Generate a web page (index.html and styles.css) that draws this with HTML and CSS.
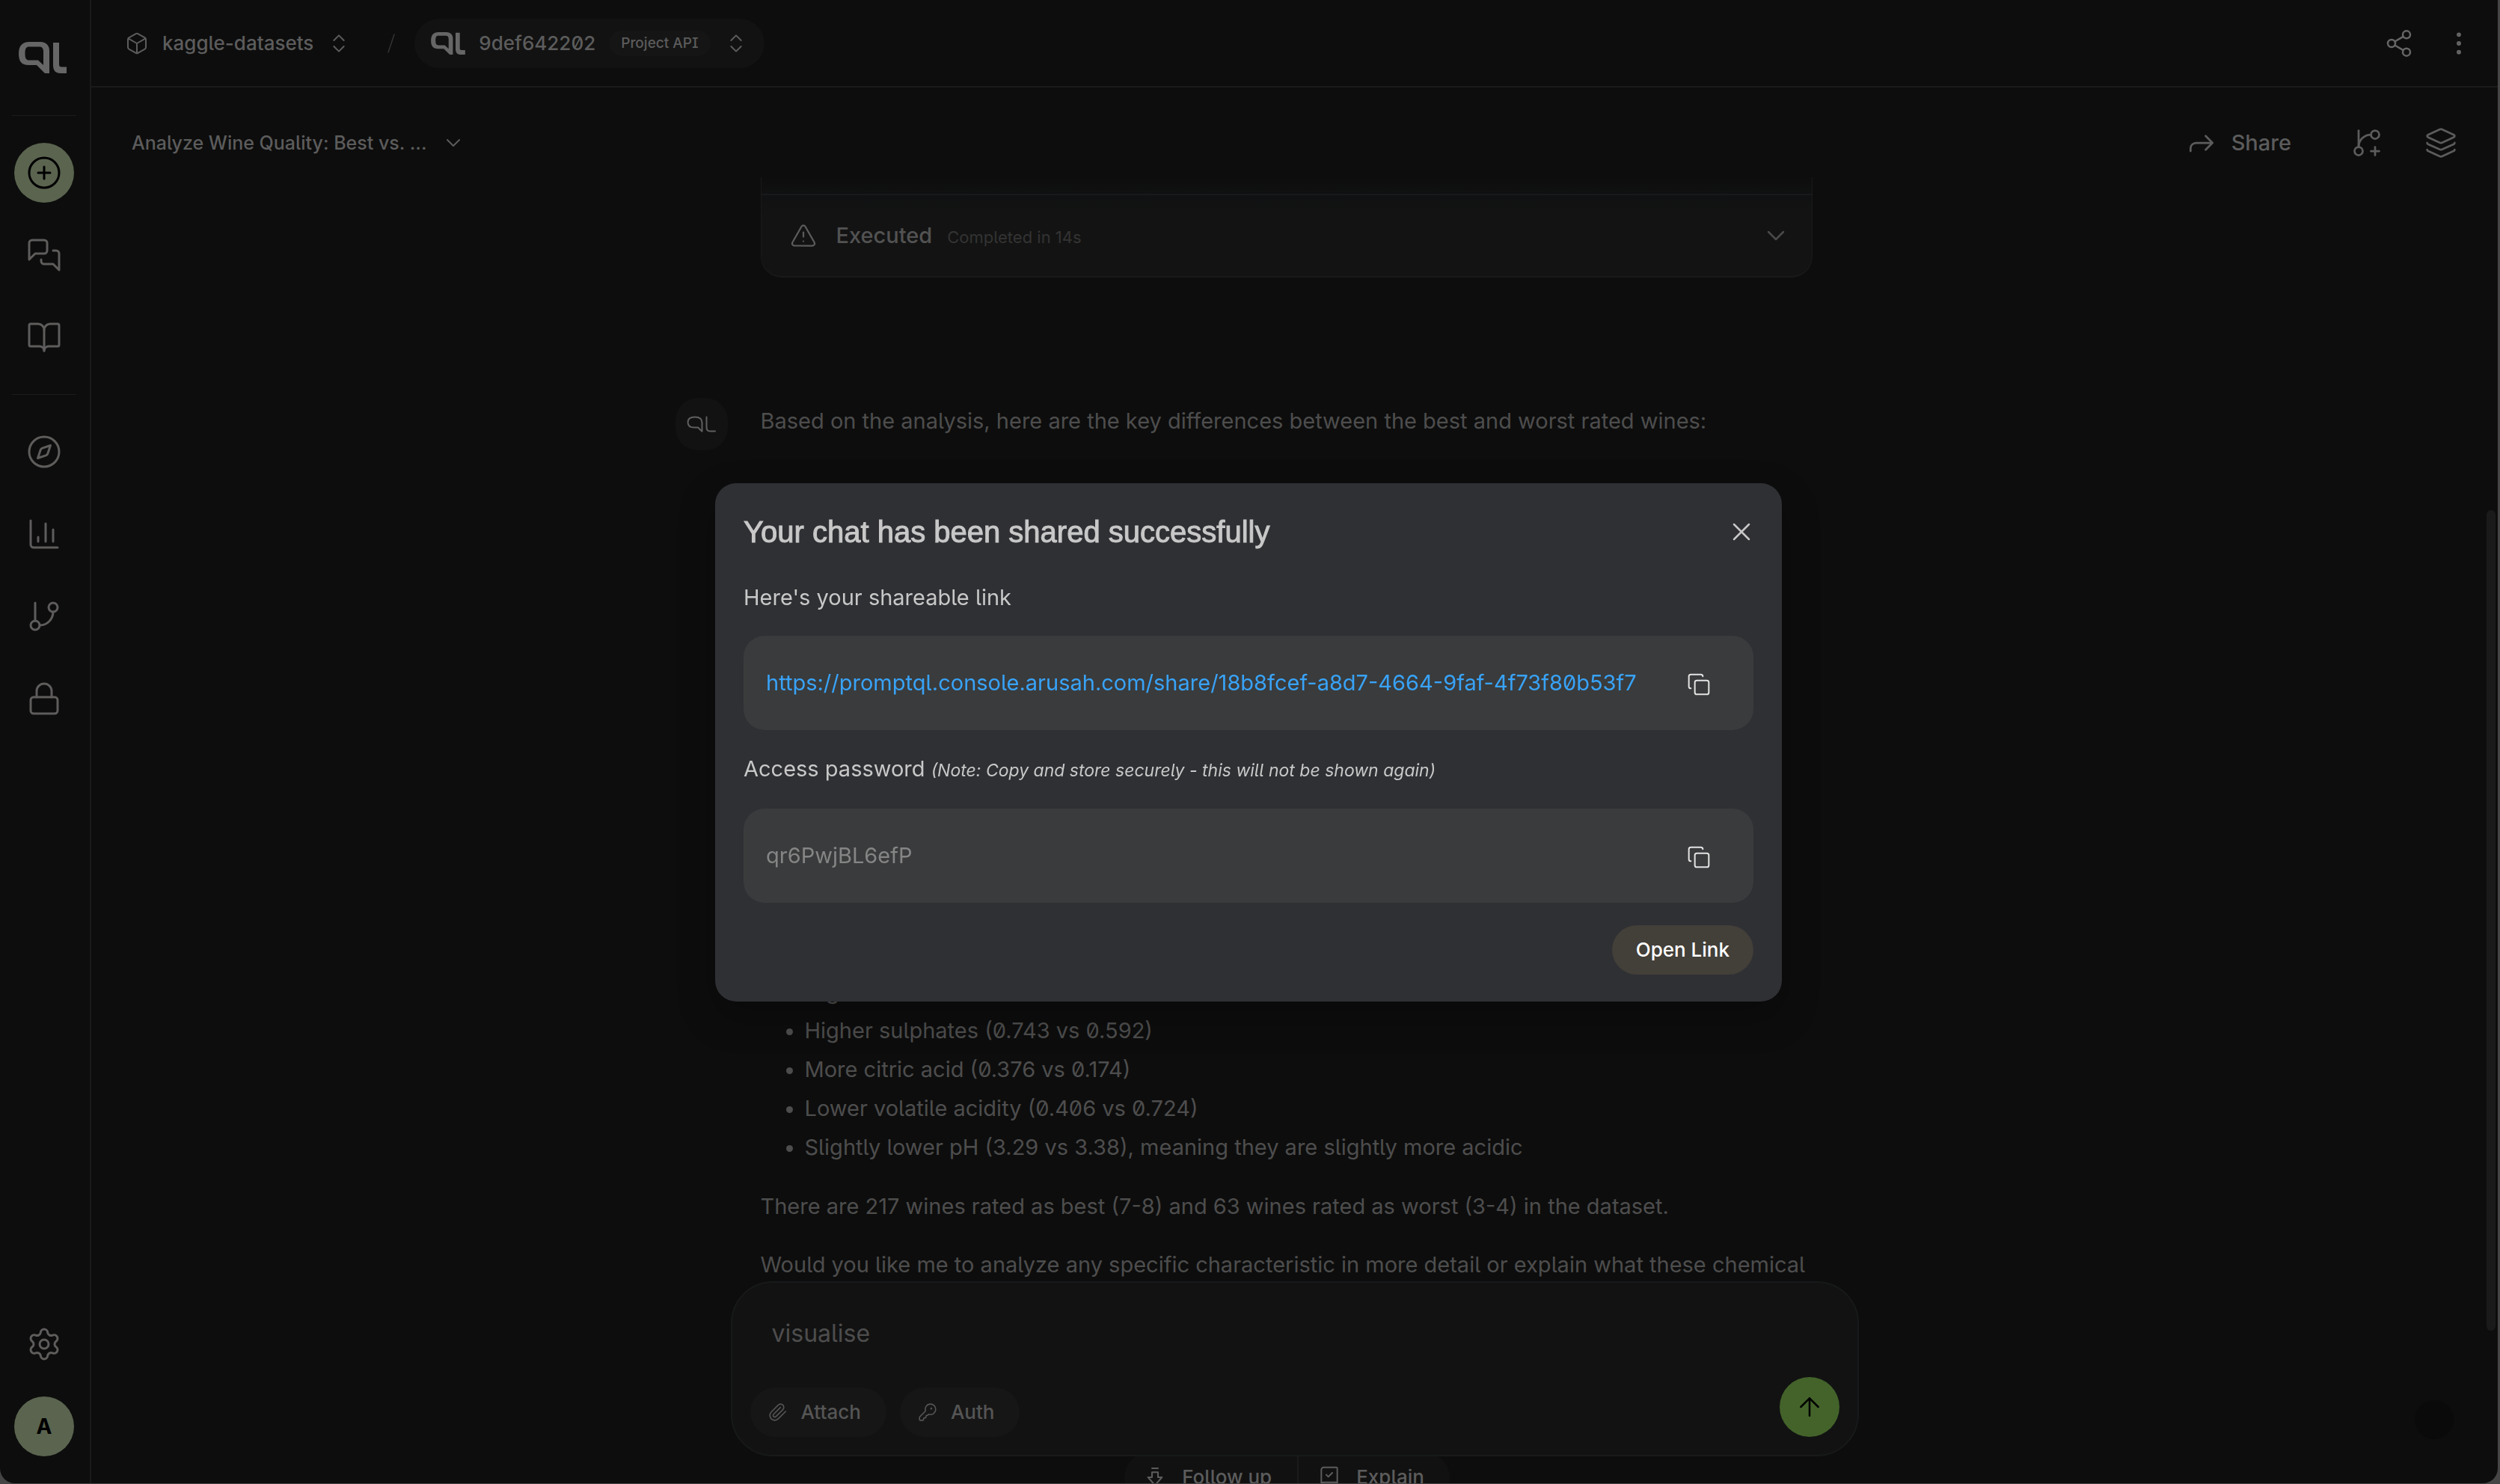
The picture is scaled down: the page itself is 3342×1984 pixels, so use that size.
FILE: index.html
```html
<!DOCTYPE html>
<html lang="en">
<head>
<meta charset="utf-8">
<title>PromptQL Console</title>
<link rel="stylesheet" href="styles.css">
</head>
<body>
<svg class="defs" aria-hidden="true">
  <symbol id="ql" viewBox="0 0 64 42"><path fill="currentColor" fill-rule="evenodd" d="M14 0H29C37 0 41 5 41 12V42H35L24 31H13C4 31 0 26 0 16C0 5 5 0 14 0ZM14 6.500C10 6.500 8.500 9 8.500 15.500C8.500 22 10 24.500 14 24.500H26L33 31V13C33 8.500 31 6.500 28 6.500ZM46 1H54V30C54 32.500 55 33.500 57.500 33.500H64V42H56C49 42 46 38 46 31Z"/></symbol>
  <symbol id="ql-thin" viewBox="0 0 39 22"><path d="M20.500 20.500V9C20.500 4 17 1.500 11 1.500C4 1.500 1.500 4 1.500 8.500C1.500 13 4 15.500 10 15.500H15L20.500 20.800M26.500 1.500V15C26.500 18.500 28 20.500 31 20.500H38"/></symbol>
  <symbol id="plus-circle" viewBox="0 0 24 24"><circle cx="12" cy="12" r="10"/><path d="M8 12h8M12 8v8"/></symbol>
  <symbol id="chats" viewBox="0 0 24 24"><path d="M14 9a2 2 0 0 1-2 2H6l-4 4V4a2 2 0 0 1 2-2h8a2 2 0 0 1 2 2z"/><path d="M18 9h2a2 2 0 0 1 2 2v11l-4-4h-6a2 2 0 0 1-2-2v-1"/></symbol>
  <symbol id="book" viewBox="0 0 24 24"><path d="M12 7v14"/><path d="M3 18a1 1 0 0 1-1-1V4a1 1 0 0 1 1-1h5a4 4 0 0 1 4 4 4 4 0 0 1 4-4h5a1 1 0 0 1 1 1v13a1 1 0 0 1-1 1h-6a3 3 0 0 0-3 3 3 3 0 0 0-3-3z"/></symbol>
  <symbol id="compass" viewBox="0 0 24 24"><circle cx="12" cy="12" r="10"/><path d="m16.240 7.760-1.804 5.411a2 2 0 0 1-1.265 1.265L7.760 16.240l1.804-5.411a2 2 0 0 1 1.265-1.265z"/></symbol>
  <symbol id="chart" viewBox="0 0 24 24"><path d="M3 3v16a2 2 0 0 0 2 2h16M18 17V9M13 17V5M8 17v-3"/></symbol>
  <symbol id="branch" viewBox="0 0 24 24"><path d="M6 3v12"/><circle cx="18" cy="6" r="3"/><circle cx="6" cy="18" r="3"/><path d="M18 9a9 9 0 0 1-9 9"/></symbol>
  <symbol id="lock" viewBox="0 0 24 24"><rect x="3" y="11" width="18" height="11" rx="2"/><path d="M7 11V7a5 5 0 0 1 10 0v4"/></symbol>
  <symbol id="gear" viewBox="0 0 24 24"><path d="M9.671 4.136a2.340 2.340 0 0 1 4.659 0 2.340 2.340 0 0 0 3.319 1.915 2.340 2.340 0 0 1 2.330 4.033 2.340 2.340 0 0 0 0 3.831 2.340 2.340 0 0 1-2.330 4.033 2.340 2.340 0 0 0-3.319 1.915 2.340 2.340 0 0 1-4.659 0 2.340 2.340 0 0 0-3.320-1.915 2.340 2.340 0 0 1-2.330-4.033 2.340 2.340 0 0 0 0-3.831A2.340 2.340 0 0 1 6.350 6.051a2.340 2.340 0 0 0 3.319-1.915"/><circle cx="12" cy="12" r="3"/></symbol>
  <symbol id="cube" viewBox="0 0 24 24"><path d="M21 8a2 2 0 0 0-1-1.730l-7-4a2 2 0 0 0-2 0l-7 4A2 2 0 0 0 3 8v8a2 2 0 0 0 1 1.730l7 4a2 2 0 0 0 2 0l7-4A2 2 0 0 0 21 16ZM3.300 7l8.700 5 8.700-5M12 22V12"/></symbol>
  <symbol id="updown" viewBox="0 0 24 24"><path d="m7 15 5 5 5-5M7 9l5-5 5 5"/></symbol>
  <symbol id="down" viewBox="0 0 24 24"><path d="m6 9 6 6 6-6"/></symbol>
  <symbol id="share-nodes" viewBox="0 0 24 24"><circle cx="18" cy="5" r="3"/><circle cx="6" cy="12" r="3"/><circle cx="18" cy="19" r="3"/><path d="m8.590 13.510 6.830 3.980M15.410 6.510l-6.820 3.980"/></symbol>
  <symbol id="dots" viewBox="0 0 24 24"><circle cx="12" cy="12" r="1"/><circle cx="12" cy="5" r="1"/><circle cx="12" cy="19" r="1"/></symbol>
  <symbol id="forward" viewBox="0 0 24 24"><path d="m15 17 5-5-5-5M4 18v-2a4 4 0 0 1 4-4h12"/></symbol>
  <symbol id="branch-plus" viewBox="0 0 24 24"><path d="M6 3v12"/><circle cx="18" cy="6" r="3"/><circle cx="6" cy="18" r="3"/><path d="M15 6a9 9 0 0 0-9 9M18 15v6M21 18h-6"/></symbol>
  <symbol id="layers" viewBox="0 0 24 24"><path d="M12.830 2.180a2 2 0 0 0-1.660 0L2.600 6.080a1 1 0 0 0 0 1.830l8.580 3.910a2 2 0 0 0 1.660 0l8.580-3.900a1 1 0 0 0 0-1.830z"/><path d="M2 12a1 1 0 0 0 .58.910l8.600 3.910a2 2 0 0 0 1.650 0l8.580-3.900A1 1 0 0 0 22 12"/><path d="M2 17a1 1 0 0 0 .58.910l8.600 3.910a2 2 0 0 0 1.650 0l8.580-3.900A1 1 0 0 0 22 17"/></symbol>
  <symbol id="warning" viewBox="0 0 24 24"><path d="m21.730 18-8-14a2 2 0 0 0-3.480 0l-8 14A2 2 0 0 0 4 21h16a2 2 0 0 0 1.730-3M12 9v4M12 17h.01"/></symbol>
  <symbol id="clip" viewBox="0 0 24 24"><path d="m21.440 11.050-9.190 9.190a6 6 0 0 1-8.490-8.490l8.570-8.570A4 4 0 1 1 18 8.840l-8.590 8.570a2 2 0 0 1-2.830-2.830l8.490-8.480"/></symbol>
  <symbol id="key" viewBox="0 0 24 24"><path d="M2.586 17.414A2 2 0 0 0 2 18.828V21a1 1 0 0 0 1 1h3a1 1 0 0 0 1-1v-1a1 1 0 0 1 1-1h1a1 1 0 0 0 1-1v-1a1 1 0 0 1 1-1h.172a2 2 0 0 0 1.414-.586l.814-.814a6.500 6.500 0 1 0-4-4z"/><circle cx="16.500" cy="7.500" r=".5"/></symbol>
  <symbol id="up" viewBox="0 0 24 24"><path d="m5 12 7-7 7 7M12 19V5"/></symbol>
  <symbol id="follow" viewBox="0 0 24 24"><path d="M15 3H9M15 7v5h4l-7 8-7-8h4V7z"/></symbol>
  <symbol id="explain" viewBox="0 0 24 24"><path d="M4 19.500v-15A2.500 2.500 0 0 1 6.500 2H19a1 1 0 0 1 1 1v18a1 1 0 0 1-1 1H6.500a1 1 0 0 1 0-5H20M9 9.500l2 2 4-4"/></symbol>
  <symbol id="close" viewBox="0 0 24 24"><path d="M18 6 6 18M6 6l12 12"/></symbol>
  <symbol id="copy" viewBox="0 0 24 24"><rect x="8" y="8" width="14" height="14" rx="2"/><path d="M4 16c-1.100 0-2-.9-2-2V4c0-1.100.9-2 2-2h10c1.100 0 2 .9 2 2"/></symbol>
</svg>

<div class="app">
  <nav class="sidebar" aria-label="Main">
    <a class="brand" href="#" aria-label="PromptQL"><svg class="brand-mark"><use href="#ql"/></svg></a>
    <div class="group">
      <a class="nav-item nav-new" href="#" aria-label="New chat"><svg class="icon icon-48"><use href="#plus-circle"/></svg></a>
      <a class="nav-item" href="#" aria-label="Chats"><svg class="icon icon-48"><use href="#chats"/></svg></a>
      <a class="nav-item" href="#" aria-label="Docs"><svg class="icon icon-48"><use href="#book"/></svg></a>
    </div>
    <div class="group">
      <a class="nav-item" href="#" aria-label="Explore"><svg class="icon icon-48"><use href="#compass"/></svg></a>
      <a class="nav-item" href="#" aria-label="Insights"><svg class="icon icon-48"><use href="#chart"/></svg></a>
      <a class="nav-item" href="#" aria-label="Builds"><svg class="icon icon-48"><use href="#branch"/></svg></a>
      <a class="nav-item" href="#" aria-label="Access"><svg class="icon icon-48"><use href="#lock"/></svg></a>
    </div>
    <div class="account">
      <a class="nav-item" href="#" aria-label="Settings"><svg class="icon icon-48"><use href="#gear"/></svg></a>
      <button class="nav-item avatar" type="button">A</button>
    </div>
  </nav>

  <main class="main">
    <header class="topbar">
      <button class="project" type="button">
        <svg class="icon icon-32"><use href="#cube"/></svg><span>kaggle-datasets</span><svg class="icon icon-32"><use href="#updown"/></svg>
      </button>
      <svg class="icon slash" viewBox="0 0 10 26"><path d="M9 1 1 25"/></svg>
      <button class="build" type="button">
        <svg class="build-mark"><use href="#ql"/></svg><span>9def642202</span><span class="badge">Project API</span><svg class="icon icon-32"><use href="#updown"/></svg>
      </button>
      <div class="topbar-actions">
        <button type="button" aria-label="Share project"><svg class="icon icon-40"><use href="#share-nodes"/></svg></button>
        <button type="button" aria-label="More"><svg class="icon icon-40"><use href="#dots"/></svg></button>
      </div>
    </header>

    <div class="threadbar">
      <button class="thread-title" type="button"><span>Analyze Wine Quality: Best vs. ...</span><svg class="icon icon-32"><use href="#down"/></svg></button>
      <div class="thread-actions">
        <button class="share" type="button"><svg class="icon icon-44"><use href="#forward"/></svg>Share</button>
        <button type="button" aria-label="Branch chat"><svg class="icon icon-44"><use href="#branch-plus"/></svg></button>
        <button type="button" aria-label="Artifacts"><svg class="icon icon-44"><use href="#layers"/></svg></button>
      </div>
    </div>

    <section class="chat">
      <div class="column">
        <div class="run-card">
          <div class="run-tail"></div>
          <button class="run-row" type="button">
            <svg class="icon icon-36"><use href="#warning"/></svg>
            <span class="run-state">Executed</span>
            <span class="run-time">Completed in 14s</span>
            <svg class="icon icon-40 run-toggle"><use href="#down"/></svg>
          </button>
        </div>
        <article class="message">
          <div class="bot"><svg class="icon bot-mark"><use href="#ql-thin"/></svg></div>
          <p>Based on the analysis, here are the key differences between the best and worst rated wines:</p>
          <ul>
            <li>Higher alcohol</li>
            <li>Higher sulphates (0.743 vs 0.592)</li>
            <li>More citric acid (0.376 vs 0.174)</li>
            <li>Lower volatile acidity (0.406 vs 0.724)</li>
            <li>Slightly lower pH (3.29 vs 3.38), meaning they are slightly more acidic</li>
          </ul>
          <p>There are 217 wines rated as best (7-8) and 63 wines rated as worst (3-4) in the dataset.</p>
          <p>Would you like me to analyze any specific characteristic in more detail or explain what these chemical</p>
        </article>
      </div>
    </section>
    <div class="scroll-thumb"></div>

    <div class="dock">
      <form class="composer">
        <textarea class="prompt" aria-label="Message">visualise</textarea>
        <div class="composer-row">
          <button class="chip" type="button"><svg class="icon icon-26"><use href="#clip"/></svg>Attach</button>
          <button class="chip" type="button"><svg class="icon icon-26"><use href="#key"/></svg>Auth</button>
          <button class="send" type="button" aria-label="Send"><svg class="icon icon-40"><use href="#up"/></svg></button>
        </div>
      </form>
      <div class="suggestions">
        <button type="button"><svg class="icon icon-32"><use href="#follow"/></svg>Follow up</button>
        <button type="button"><svg class="icon icon-32"><use href="#explain"/></svg>Explain</button>
      </div>
    </div>
    <div class="help-dot"></div>
  </main>
</div>

<div class="overlay">
  <div class="dialog" role="dialog" aria-modal="true" aria-labelledby="dialog-title">
    <div class="dialog-head">
      <h2 id="dialog-title">Your chat has been shared successfully</h2>
      <button class="close" type="button" aria-label="Close"><svg class="icon icon-40"><use href="#close"/></svg></button>
    </div>
    <p class="field-label">Here's your shareable link</p>
    <div class="field">
      <a class="share-link" href="https://promptql.console.arusah.com/share/18b8fcef-a8d7-4664-9faf-4f73f80b53f7">https://promptql.console.arusah.com/share/18b8fcef-a8d7-4664-9faf-4f73f80b53f7</a>
      <button class="copy" type="button" aria-label="Copy link"><svg class="icon icon-32"><use href="#copy"/></svg></button>
    </div>
    <p class="field-label">Access password <em>(Note: Copy and store securely - this will not be shown again)</em></p>
    <div class="field">
      <span class="password">qr6PwjBL6efP</span>
      <button class="copy" type="button" aria-label="Copy password"><svg class="icon icon-32"><use href="#copy"/></svg></button>
    </div>
    <div class="dialog-foot"><button class="open-link" type="button">Open Link</button></div>
  </div>
</div>
</body>
</html>
```
FILE: styles.css
```css
* { box-sizing: border-box; }

body {
  margin: 0;
  height: 100vh;
  padding: 0 3px 1px 0;
  overflow: hidden;
  background: #454545;
  color: #5c5c5c;
  font-family: Inter, "Liberation Sans", sans-serif;
  font-size: 29px;
  line-height: 44px;
  font-optical-sizing: none;
  font-feature-settings: "ss02";
}

button {
  margin: 0;
  padding: 0;
  border: 0;
  background: none;
  color: inherit;
  font: inherit;
  font-optical-sizing: inherit;
  font-feature-settings: inherit;
  display: flex;
  align-items: center;
}

p, h2, ul { margin: 0; }

.defs { position: absolute; width: 0; height: 0; }

.icon {
  flex: none;
  display: block;
  fill: none;
  stroke: currentColor;
  stroke-width: 1.5px;
  stroke-linecap: round;
  stroke-linejoin: round;
}
.icon-26 { width: 26px; height: 26px; }
.icon-32 { width: 32px; height: 32px; }
.icon-36 { width: 36px; height: 36px; }
.icon-40 { width: 40px; height: 40px; }
.icon-44 { width: 44px; height: 44px; }
.icon-48 { width: 48px; height: 48px; }

.app {
  display: flex;
  height: 100%;
  overflow: hidden;
  background: #0d0d0d;
  border-radius: 0 0 20px 20px;
}

/* Sidebar */
.sidebar {
  flex: none;
  display: flex;
  flex-direction: column;
  width: 122px;
  padding: 0 18px 36px 16px;
  border-right: 2px solid #1a1a1a;
  color: #5f5d5c;
}
.brand {
  display: flex;
  align-items: center;
  justify-content: center;
  height: 154px;
  color: #666;
}
.brand-mark { width: 64px; height: 42px; margin-right: 4px; }
.group {
  display: flex;
  flex-direction: column;
  align-items: center;
  gap: 30px;
  padding: 36px 0;
  border-top: 1px solid #1c1c1c;
}
.nav-item {
  display: flex;
  align-items: center;
  justify-content: center;
  width: 80px;
  height: 80px;
  border-radius: 50%;
  color: inherit;
}
.nav-new, .avatar { background: #5a644f; color: #000; }
.avatar { font-size: 28px; font-weight: 700; }
.account {
  display: flex;
  flex-direction: column;
  align-items: center;
  gap: 30px;
  margin-top: auto;
}

/* Main area */
.main {
  position: relative;
  flex: 1;
  min-width: 0;
  display: flex;
  flex-direction: column;
}
.topbar {
  flex: none;
  display: flex;
  align-items: center;
  height: 117px;
  padding: 0 32px 0 45px;
  border-bottom: 2px solid #1a1a1a;
  font-size: 26px;
  font-weight: 500;
}
.project { gap: 18px; }
.slash { width: 10px; height: 26px; margin: 0 26px 0 49px; stroke: #333; }
.build {
  gap: 18px;
  height: 66px;
  padding: 0 22px;
  border-radius: 33px;
  background: #121212;
}
.build-mark { width: 46px; height: 30px; color: #666; }
.badge {
  padding: 0 16px;
  border-radius: 17px;
  background: #151515;
  font-size: 19px;
  line-height: 34px;
}
.topbar-actions { display: flex; gap: 40px; margin-left: auto; color: #666; }

.threadbar {
  flex: none;
  display: flex;
  align-items: center;
  justify-content: space-between;
  height: 120px;
  padding: 27px 54px 0 54px;
}
.thread-title { gap: 20px; font-size: 25px; font-weight: 500; }
.thread-actions { display: flex; gap: 55px; color: #5c5c5c; }
.share { gap: 18px; margin-right: 24px; font-weight: 500; }

.chat {
  flex: 1;
  min-height: 0;
  overflow: hidden;
  padding-right: 22px;
}
.column { max-width: 1406px; margin: 0 auto; }

.run-card {
  border: solid #1a1a1a;
  border-width: 0 1px 2px;
  border-radius: 0 0 28px 28px;
  background: linear-gradient(#0d0d0d, #101112 24px, #131313 48px);
}
.run-tail { height: 22px; }
.run-row {
  width: 100%;
  height: 110px;
  padding: 0 28px 0 38px;
  border-top: 2px solid #181a1a;
}
.run-state { margin: 0 20px 0 26px; font-weight: 500; color: #525252; }
.run-time { padding-top: 4px; font-size: 22px; color: #333; }
.run-toggle { margin-left: auto; color: #4a4a4a; }

.message {
  position: relative;
  margin-top: 165px;
  color: #4d4d4d;
  line-height: 53px;
}
.message p { margin-bottom: 25px; }
.message ul { margin: 711px 0 26px; padding: 0 0 0 59px; line-height: 52px; }
.bot {
  position: absolute;
  top: -4px;
  left: -114px;
  display: flex;
  align-items: center;
  justify-content: center;
  width: 70px;
  height: 70px;
  border-radius: 30px;
  background: #121212;
  color: #5f5f5f;
}
.bot-mark { width: 39px; height: 22px; stroke-width: 2px; }

.scroll-thumb {
  position: absolute;
  top: 34.4%;
  right: 3px;
  bottom: 204px;
  width: 12px;
  border-radius: 6px;
  background: #1a1a1a;
}
.help-dot {
  position: absolute;
  right: 59px;
  bottom: 59px;
  width: 52px;
  height: 52px;
  border-radius: 50%;
  background: #0a0a0a;
}

/* Composer stays over the end of the thread */
.dock {
  position: absolute;
  right: 0;
  bottom: -25px;
  left: 0;
  display: flex;
  flex-direction: column;
  align-items: center;
}
.composer {
  position: relative;
  z-index: 1;
  width: 100%;
  max-width: 1508px;
  padding: 0 24px 24px;
  border: 2px solid #17191a;
  border-radius: 56px;
  background: #121212;
}
.prompt {
  display: block;
  width: 100%;
  height: 126px;
  padding: 46px 29px 0;
  border: 0;
  outline: 0;
  resize: none;
  overflow: hidden;
  background: none;
  color: #4d4d4d;
  font: inherit;
  font-optical-sizing: inherit;
  font-feature-settings: inherit;
  font-size: 32px;
}
.composer-row { display: flex; align-items: flex-end; gap: 18px; }
.chip {
  gap: 18px;
  height: 66px;
  padding: 0 34px 0 24px;
  border-radius: 33px;
  background: #161616;
  font-size: 26px;
  font-weight: 500;
  color: #555;
}
.send {
  justify-content: center;
  width: 80px;
  height: 80px;
  margin-left: auto;
  border-radius: 50%;
  background: #43632a;
  color: #000;
}
.suggestions {
  display: flex;
  height: 66px;
  margin: -5px 20px 0 0;
  overflow: hidden;
  border-radius: 33px;
  background: #111;
  font-size: 26px;
  font-weight: 500;
}
.suggestions button { gap: 20px; padding: 0 34px 0 25px; }
.suggestions button + button { border-left: 2px solid #1a1a1a; }

/* Share dialog */
.overlay {
  position: fixed;
  inset: 0;
  display: flex;
  align-items: center;
  justify-content: center;
  padding-right: 4px;
}
.dialog {
  width: 100%;
  max-width: 1426px;
  padding: 38px 38px 36px;
  border-radius: 28px;
  background: #2f3034;
  box-shadow: 0 20px 50px rgba(0, 0, 0, 0.25);
  color: #c8c8c8;
}
.dialog-head {
  display: flex;
  align-items: center;
  justify-content: space-between;
  height: 54px;
  margin-bottom: 39px;
}
.dialog-head h2 {
  font-family: "Liberation Sans", Arial, sans-serif;
  font-size: 40px;
  font-weight: 400;
  line-height: 54px;
  -webkit-text-stroke: 1px currentColor;
}
.close { margin-right: -4px; }
.field-label { margin-bottom: 29px; }
.field-label em { font-size: 23px; }
.field {
  display: flex;
  align-items: center;
  justify-content: space-between;
  height: 126px;
  margin-bottom: 30px;
  padding: 0 57px 0 30px;
  border-radius: 28px;
  background: #3a3b3c;
}
.share-link { color: #38a3f8; text-decoration: none; }
.password { color: #858585; }
.copy { padding-top: 4px; color: #e4e4e4; }
.dialog-foot { display: flex; justify-content: flex-end; }
.open-link {
  height: 66px;
  padding: 0 32px;
  border-radius: 33px;
  background: #433f39;
  color: #fff;
  font-size: 26px;
  font-weight: 500;
}
```
